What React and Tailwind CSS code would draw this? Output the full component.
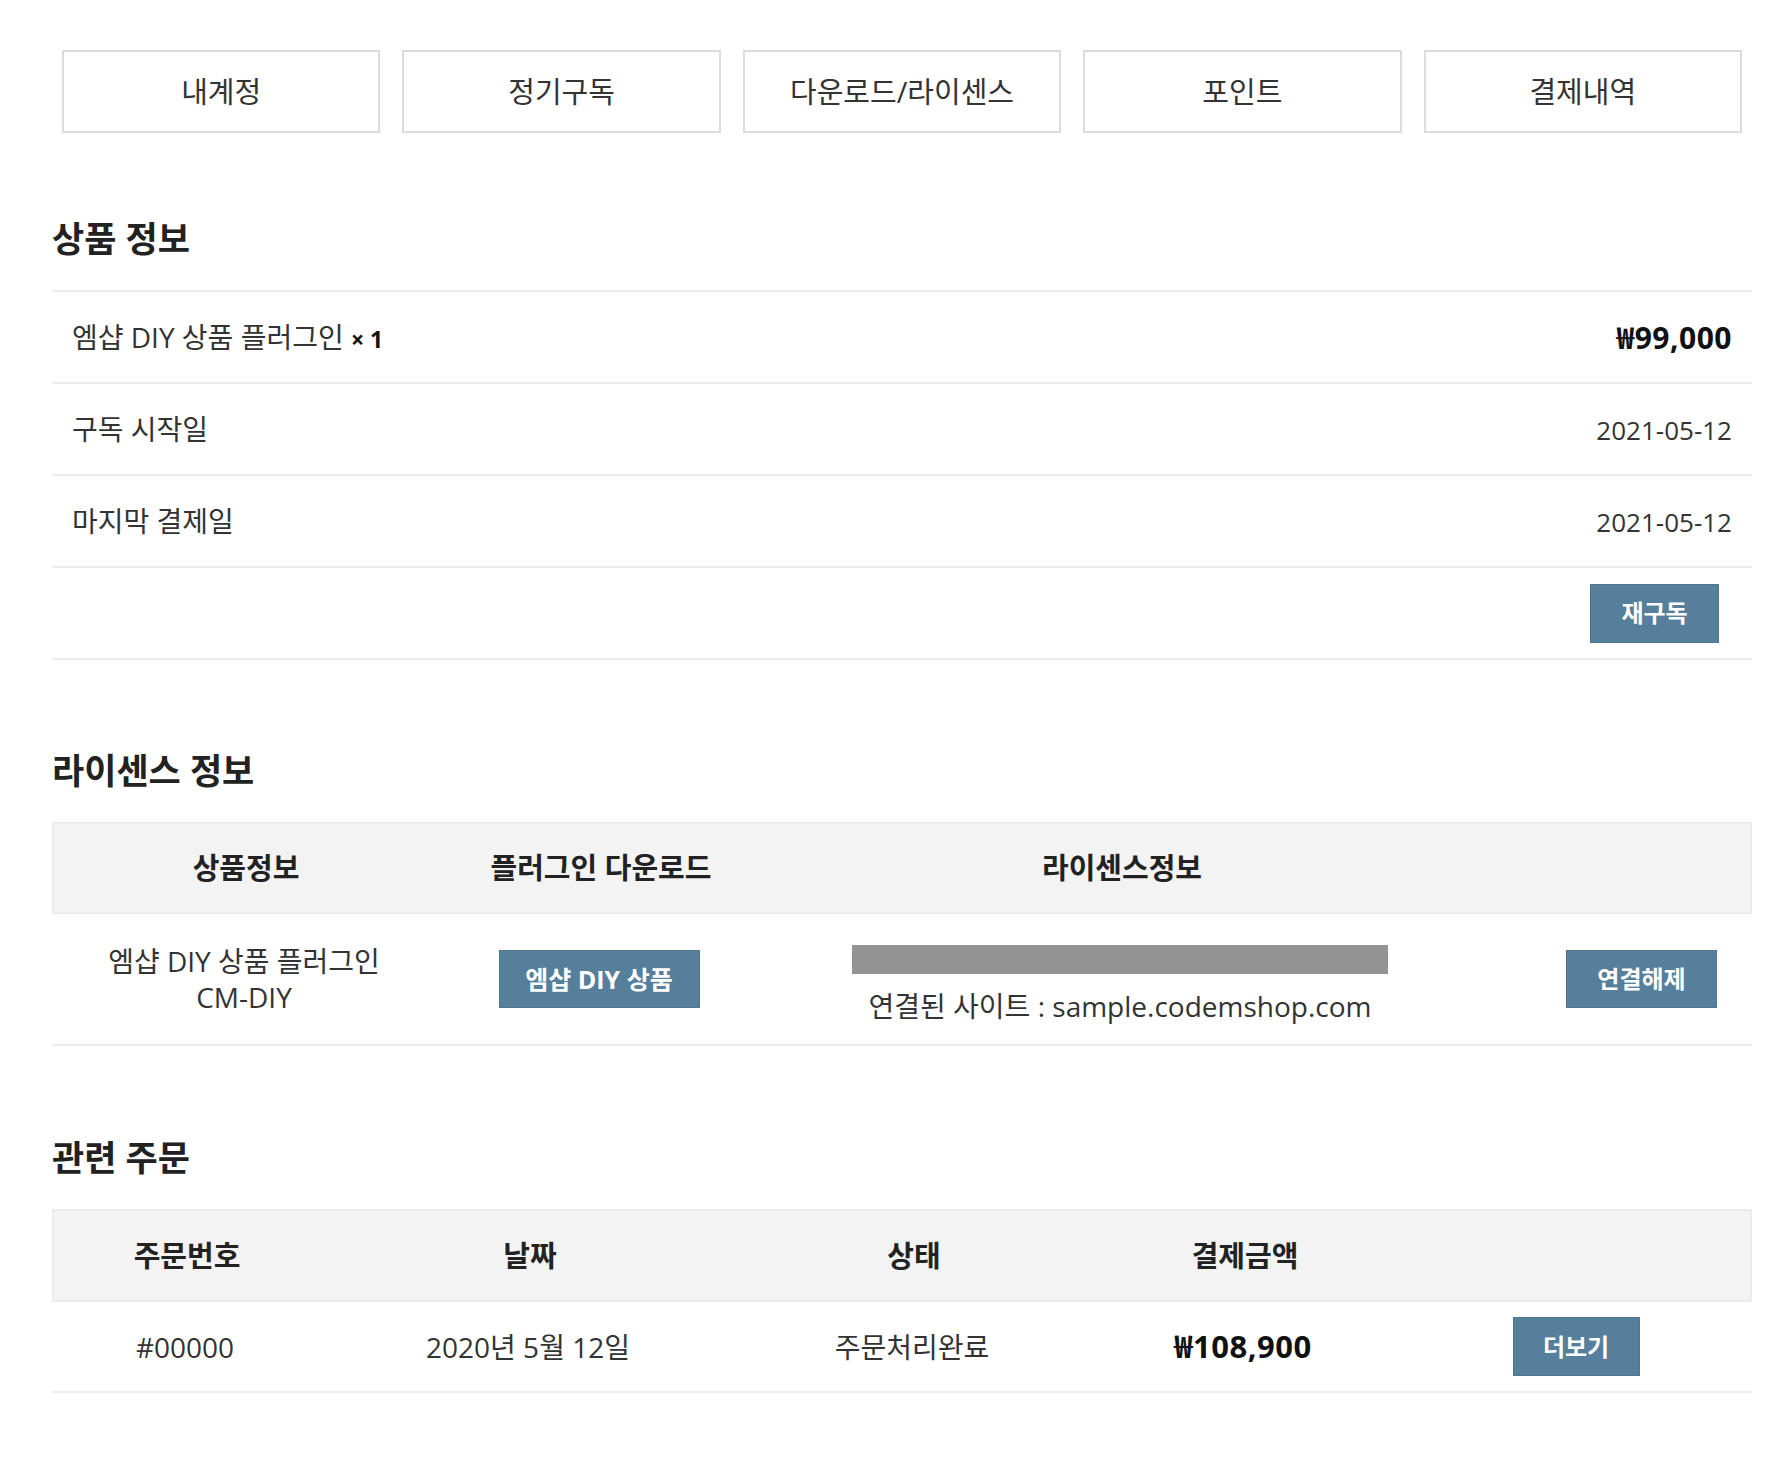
import React from "react";

const tabs = ["내계정", "정기구독", "다운로드/라이센스", "포인트", "결제내역"];

const font = "font-['Open_Sans','Noto_Sans_CJK_KR',sans-serif]";

const Btn = ({ children, className = "" }) => (
  <button
    className={`bg-[#557f9b] border border-[#4d7590] text-white font-bold text-[24px] leading-none ${className}`}
  >
    {children}
  </button>
);

const Title = ({ children }) => (
  <h2 className="text-[35px] font-bold text-[#222] leading-[45px]">{children}</h2>
);

const InfoRow = ({ left, right }) => (
  <div className="h-[92px] flex items-center justify-between px-5 border-b-2 border-[#ececec] text-[28px] text-[#333]">
    <div>{left}</div>
    <div>{right}</div>
  </div>
);

const App = () => {
  return (
    <div className={`${font} bg-white min-h-[1474px] pl-[52px] pr-[26px] pt-[50px]`}>
      <div className="grid grid-cols-5 gap-[22px] px-[10px]">
        {tabs.map((t) => (
          <div
            key={t}
            className="h-[83px] border-2 border-[#dcdcdc] flex items-center justify-center text-[29px] text-[#333]"
          >
            {t}
          </div>
        ))}
      </div>

      <div className="mt-[83px]">
        <Title>상품 정보</Title>
        <div className="mt-[29px] border-t-2 border-[#ececec]">
          <InfoRow
            left={
              <span>
                엠샵 DIY 상품 플러그인 <span className="font-bold text-[23px] text-[#111]">× 1</span>
              </span>
            }
            right={<span className="font-bold text-[30px] tracking-[0.5px] text-[#111]">₩99,000</span>}
          />
          <InfoRow left="구독 시작일" right={<span className="text-[26px]">2021-05-12</span>} />
          <InfoRow left="마지막 결제일" right={<span className="text-[26px]">2021-05-12</span>} />
          <div className="h-[92px] flex items-center justify-end pr-[33px] border-b-2 border-[#ececec]">
            <Btn className="w-[129px] h-[59px]">재구독</Btn>
          </div>
        </div>
      </div>

      <div className="mt-[88px]">
        <Title>라이센스 정보</Title>
        <div className="mt-[29px]">
          <div className="h-[92px] grid grid-cols-[384px_326px_716px_1fr] items-center bg-[#f3f3f3] border-2 border-[#ebebeb] text-[29px] font-bold text-[#222] text-center">
            <div>상품정보</div>
            <div>플러그인 다운로드</div>
            <div>라이센스정보</div>
            <div />
          </div>
          <div className="h-[132px] grid grid-cols-[384px_326px_716px_1fr] items-center border-b-2 border-[#ececec] text-[28px] text-[#333] text-center">
            <div className="leading-[36px]">
              엠샵 DIY 상품 플러그인
              <br />
              CM-DIY
            </div>
            <div className="flex justify-center">
              <Btn className="w-[201px] h-[58px] text-[25px]">엠샵 DIY 상품</Btn>
            </div>
            <div className="flex flex-col items-center pt-[10px]">
              <div className="w-[536px] h-[29px] bg-[#939393]" />
              <div className="mt-[14px] leading-[36px]">연결된 사이트 : sample.codemshop.com</div>
            </div>
            <div className="flex justify-end pr-[35px]">
              <Btn className="w-[151px] h-[58px]">연결해제</Btn>
            </div>
          </div>
        </div>
      </div>

      <div className="mt-[89px]">
        <Title>관련 주문</Title>
        <div className="mt-[29px]">
          <div className="h-[93px] grid grid-cols-[266px_420px_348px_314px_1fr] items-center bg-[#f3f3f3] border-2 border-[#ebebeb] text-[29px] font-bold text-[#222] text-center">
            <div>주문번호</div>
            <div>날짜</div>
            <div>상태</div>
            <div>결제금액</div>
            <div />
          </div>
          <div className="h-[91px] grid grid-cols-[266px_420px_348px_314px_1fr] items-center border-b-2 border-[#ececec] text-[28px] text-[#333] text-center">
            <div>#00000</div>
            <div>2020년 5월 12일</div>
            <div>주문처리완료</div>
            <div className="font-bold text-[31px] tracking-[0.5px] text-[#111]">₩108,900</div>
            <div className="flex justify-center">
              <Btn className="w-[127px] h-[59px]">더보기</Btn>
            </div>
          </div>
        </div>
      </div>
    </div>
  );
};

export default App;
